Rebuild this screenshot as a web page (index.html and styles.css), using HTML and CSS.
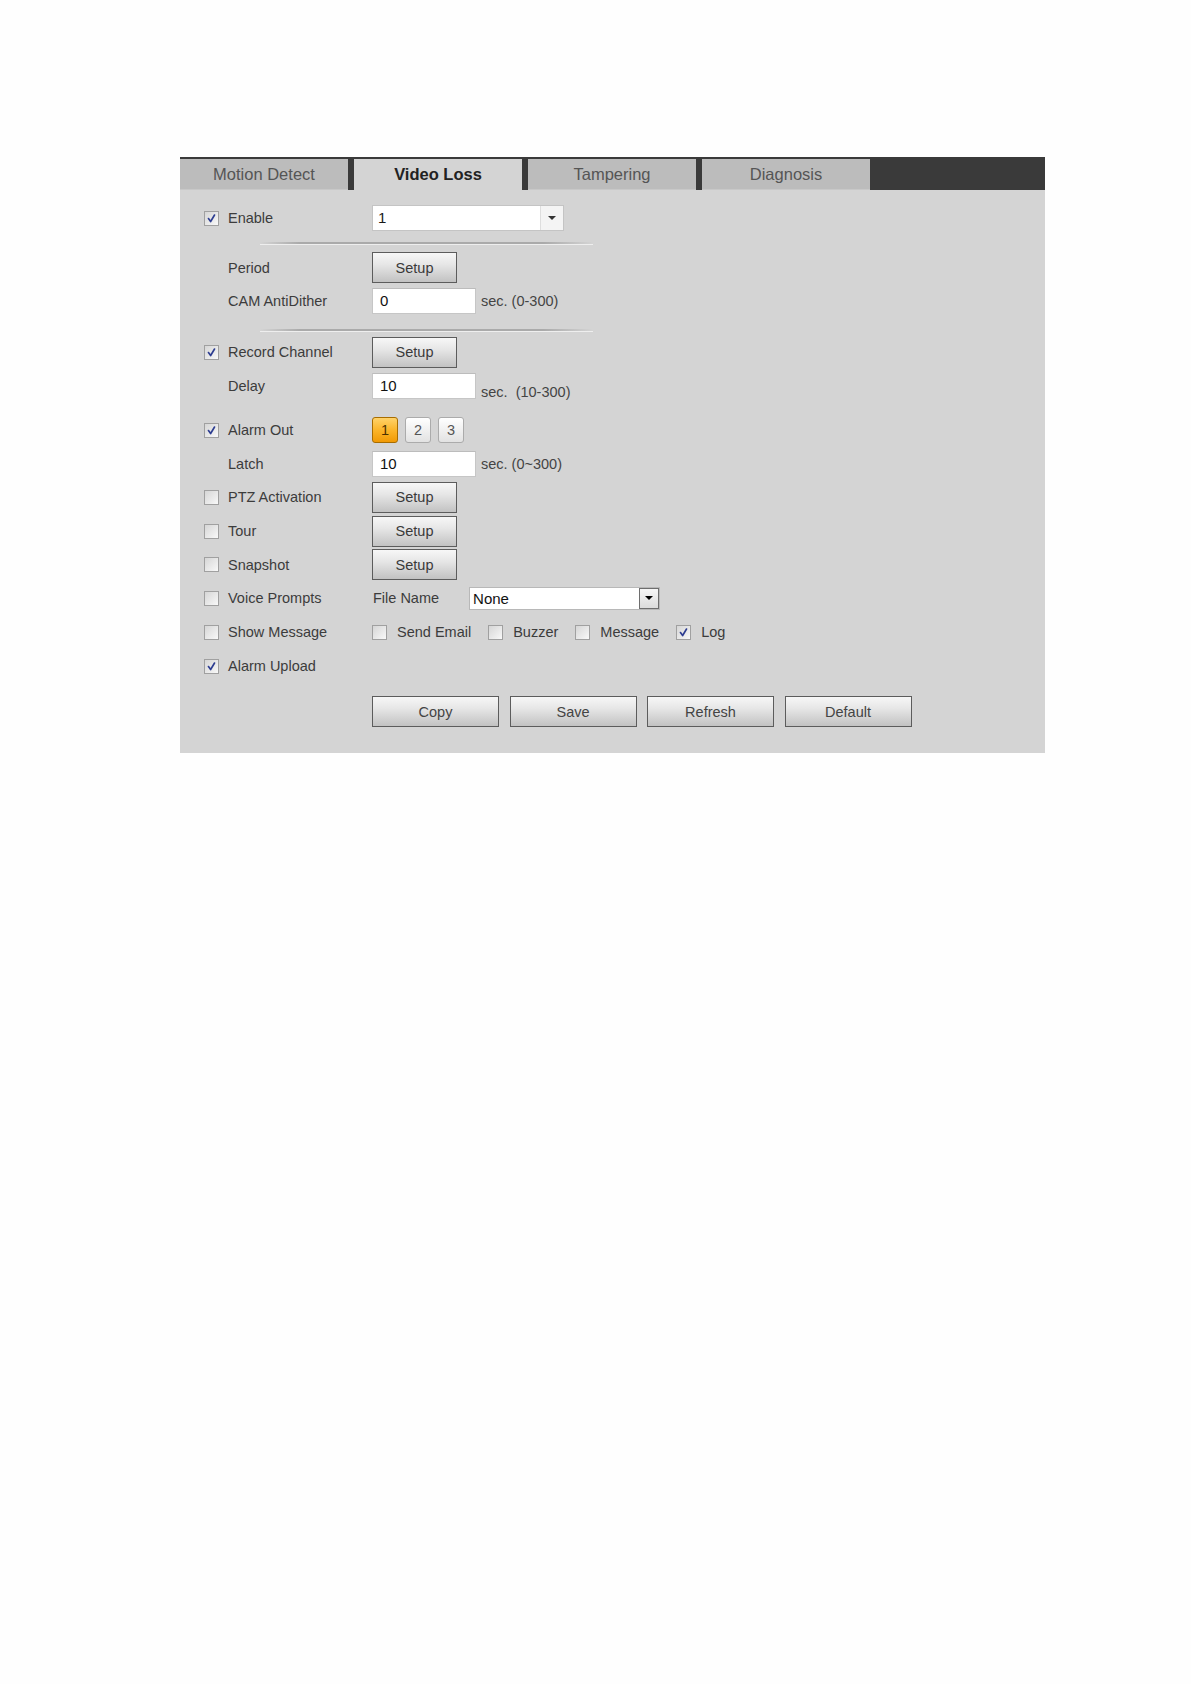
FILE: index.html
```html
<!DOCTYPE html>
<html lang="en">
<head>
<meta charset="utf-8">
<title>Video Loss</title>
<link rel="stylesheet" href="styles.css">
</head>
<body>
<div class="panel">
  <div class="tabs">
    <div class="tab">Motion Detect</div>
    <div class="tab active">Video Loss</div>
    <div class="tab">Tampering</div>
    <div class="tab">Diagnosis</div>
  </div>
  <div class="body">
    <div class="row r-enable">
      <div class="lab"><span class="cb on"><svg viewBox="0 0 15 15"><path d="M4 7.5 L6.5 11 L11 3.5"/></svg></span>Enable</div>
      <div class="ctl">
        <div class="select sel-ch"><span class="val">1</span><span class="arrow"><i class="tri"></i></span></div>
      </div>
    </div>
    <div class="sep sep1"></div>
    <div class="row r-period">
      <div class="lab plain">Period</div>
      <div class="ctl"><div class="btn setup">Setup</div></div>
    </div>
    <div class="row r-cam">
      <div class="lab plain">CAM AntiDither</div>
      <div class="ctl"><div class="input">0</div><span class="unit">sec. (0-300)</span></div>
    </div>
    <div class="sep sep2"></div>
    <div class="row r-std">
      <div class="lab"><span class="cb on"><svg viewBox="0 0 15 15"><path d="M4 7.5 L6.5 11 L11 3.5"/></svg></span>Record Channel</div>
      <div class="ctl"><div class="btn setup">Setup</div></div>
    </div>
    <div class="row r-std">
      <div class="lab plain">Delay</div>
      <div class="ctl"><div class="input">10</div><span class="unit low">sec.&nbsp; (10-300)</span></div>
    </div>
    <div class="row r-std r-alarm">
      <div class="lab"><span class="cb on"><svg viewBox="0 0 15 15"><path d="M4 7.5 L6.5 11 L11 3.5"/></svg></span>Alarm Out</div>
      <div class="ctl chans">
        <div class="chan active">1</div>
        <div class="chan">2</div>
        <div class="chan">3</div>
      </div>
    </div>
    <div class="row r-short">
      <div class="lab plain">Latch</div>
      <div class="ctl"><div class="input">10</div><span class="unit">sec. (0~300)</span></div>
    </div>
    <div class="row r-std">
      <div class="lab"><span class="cb"></span>PTZ Activation</div>
      <div class="ctl"><div class="btn setup">Setup</div></div>
    </div>
    <div class="row r-std">
      <div class="lab"><span class="cb"></span>Tour</div>
      <div class="ctl"><div class="btn setup">Setup</div></div>
    </div>
    <div class="row r-short">
      <div class="lab"><span class="cb"></span>Snapshot</div>
      <div class="ctl"><div class="btn setup">Setup</div></div>
    </div>
    <div class="row r-std">
      <div class="lab"><span class="cb"></span>Voice Prompts</div>
      <div class="ctl">
        <span class="fname">File Name</span>
        <div class="select sel-file"><span class="val">None</span><span class="arrow"><i class="tri"></i></span></div>
      </div>
    </div>
    <div class="row r-std">
      <div class="lab"><span class="cb"></span>Show Message</div>
      <div class="ctl opts">
        <span class="opt"><span class="cb small"></span>Send Email</span>
        <span class="opt"><span class="cb small"></span>Buzzer</span>
        <span class="opt"><span class="cb small"></span>Message</span>
        <span class="opt"><span class="cb small on"><svg viewBox="0 0 15 15"><path d="M4 7.5 L6.5 11 L11 3.5"/></svg></span>Log</span>
      </div>
    </div>
    <div class="row r-std">
      <div class="lab"><span class="cb on"><svg viewBox="0 0 15 15"><path d="M4 7.5 L6.5 11 L11 3.5"/></svg></span>Alarm Upload</div>
      <div class="ctl"></div>
    </div>
    <div class="actions">
      <div class="btn wide">Copy</div>
      <div class="btn wide">Save</div>
      <div class="btn wide">Refresh</div>
      <div class="btn wide">Default</div>
    </div>
  </div>
</div>
</body>
</html>
```
FILE: styles.css
```css
html, body {
  margin: 0;
  padding: 0;
  background: #fefefe;
}
body {
  font-family: "Liberation Sans", Arial, sans-serif;
  color: #3a3a3a;
}
.panel {
  margin: 157px 0 0 180px;
  width: 865px;
  background: #d4d4d4;
}
.tabs {
  display: flex;
  gap: 6px;
  background: #3a3a3a;
  padding-top: 2px;
  height: 31px;
}
.tab {
  width: 168px;
  height: 31px;
  background: #bcbcbc;
  color: #555;
  font-size: 16.5px;
  display: flex;
  align-items: center;
  justify-content: center;
  box-shadow: inset 0 -1px 0 #c8c8c8;
}
.tab.active {
  background: #d4d4d4;
  color: #222;
  font-weight: bold;
  box-shadow: none;
}
.body {
  padding: 12px 0 26px 24px;
  font-size: 14.5px;
}
.row {
  display: flex;
  align-items: center;
  height: 34px;
}
.r-enable { height: 32px; }
.r-period { height: 31px; }
.r-cam { height: 36px; }
.r-short { height: 33px; }
.r-alarm { margin-top: 10px; }
.lab {
  width: 168px;
  display: flex;
  align-items: center;
  color: #3c3c3c;
  white-space: nowrap;
}
.lab.plain { padding-left: 24px; box-sizing: border-box; }
.ctl {
  display: flex;
  align-items: center;
}
.cb {
  width: 13px;
  height: 13px;
  border: 1px solid #a0a0a0;
  background: linear-gradient(135deg, #d6d6d6 0%, #eeeeee 70%, #f9f9f9 100%);
  margin-right: 9px;
  display: inline-flex;
  flex: none;
}
.cb.small { margin-right: 10px; }
.cb svg { width: 13px; height: 13px; }
.cb svg path {
  fill: none;
  stroke: #2d3d91;
  stroke-width: 1.9;
  stroke-linecap: round;
  stroke-linejoin: round;
}
.sep {
  height: 2px;
  margin-left: 56px;
  width: 333px;
  background: linear-gradient(90deg, rgba(170,170,170,0) 0%, #aaaaaa 12%, #aaaaaa 85%, rgba(170,170,170,0) 100%);
  box-shadow: 0 1px 0 rgba(255,255,255,0.6);
}
.sep1 { margin-top: 8px; margin-bottom: 8px; }
.sep2 { margin-top: 10px; margin-bottom: 4px; }
.select {
  display: flex;
  background: #fff;
  box-sizing: border-box;
  color: #1a1a1a;
}
.sel-ch {
  width: 192px;
  height: 26px;
  border: 1px solid #c4c4c4;
}
.sel-ch .val { flex: 1; padding-left: 5px; line-height: 24px; font-size: 15px; }
.sel-ch .arrow {
  width: 22px;
  border-left: 1px solid #dedede;
  background: #f4f4f4;
  display: flex;
  align-items: center;
  justify-content: center;
}
.tri {
  width: 0;
  height: 0;
  border-left: 4px solid transparent;
  border-right: 4px solid transparent;
  border-top: 4px solid #333;
}
.sel-file {
  width: 191px;
  height: 23px;
  border: 1px solid #b8b8b8;
  margin-left: 30px;
}
.sel-file .val { flex: 1; padding-left: 3px; line-height: 22px; font-size: 15px; color: #111; }
.sel-file .arrow {
  width: 18px;
  border: 1px solid #6e6e6e;
  background: linear-gradient(#f6f6f6, #dcdcdc);
  display: flex;
  align-items: center;
  justify-content: center;
}
.sel-file .tri { border-top-color: #000; }
.fname { margin-left: 1px; color: #3c3c3c; }
.btn {
  box-sizing: border-box;
  height: 31px;
  border: 1px solid #5c5c5c;
  background: linear-gradient(#f7f7f7 0%, #e6e6e6 40%, #c2c2c2 100%);
  color: #3a3a3a;
  display: flex;
  align-items: center;
  justify-content: center;
}
.setup { width: 85px; }
.input {
  box-sizing: border-box;
  width: 104px;
  height: 26px;
  border: 1px solid #c6c6c6;
  border-top-color: #bcbcbc;
  background: #fff;
  padding-left: 7px;
  line-height: 24px;
  font-size: 15px;
  color: #111;
}
.unit {
  margin-left: 5px;
  color: #444;
}
.unit.low { margin-top: 12px; }
.chans { gap: 7px; }
.chan {
  box-sizing: border-box;
  width: 26px;
  height: 26px;
  border: 1px solid #ababab;
  border-radius: 3px;
  background: linear-gradient(#ffffff, #e2e2e2);
  color: #555;
  display: flex;
  align-items: center;
  justify-content: center;
}
.chan.active {
  border-color: #a86d00;
  background: linear-gradient(#ffd36a 0%, #fbb52a 50%, #f19a05 100%);
  color: #4a3000;
}
.opts { gap: 0; }
.opt {
  display: flex;
  align-items: center;
  margin-right: 17px;
  color: #3c3c3c;
}
.actions {
  display: flex;
  gap: 10.5px;
  margin: 13px 0 0 168px;
}
.wide { width: 127px; color: #444; }
```
